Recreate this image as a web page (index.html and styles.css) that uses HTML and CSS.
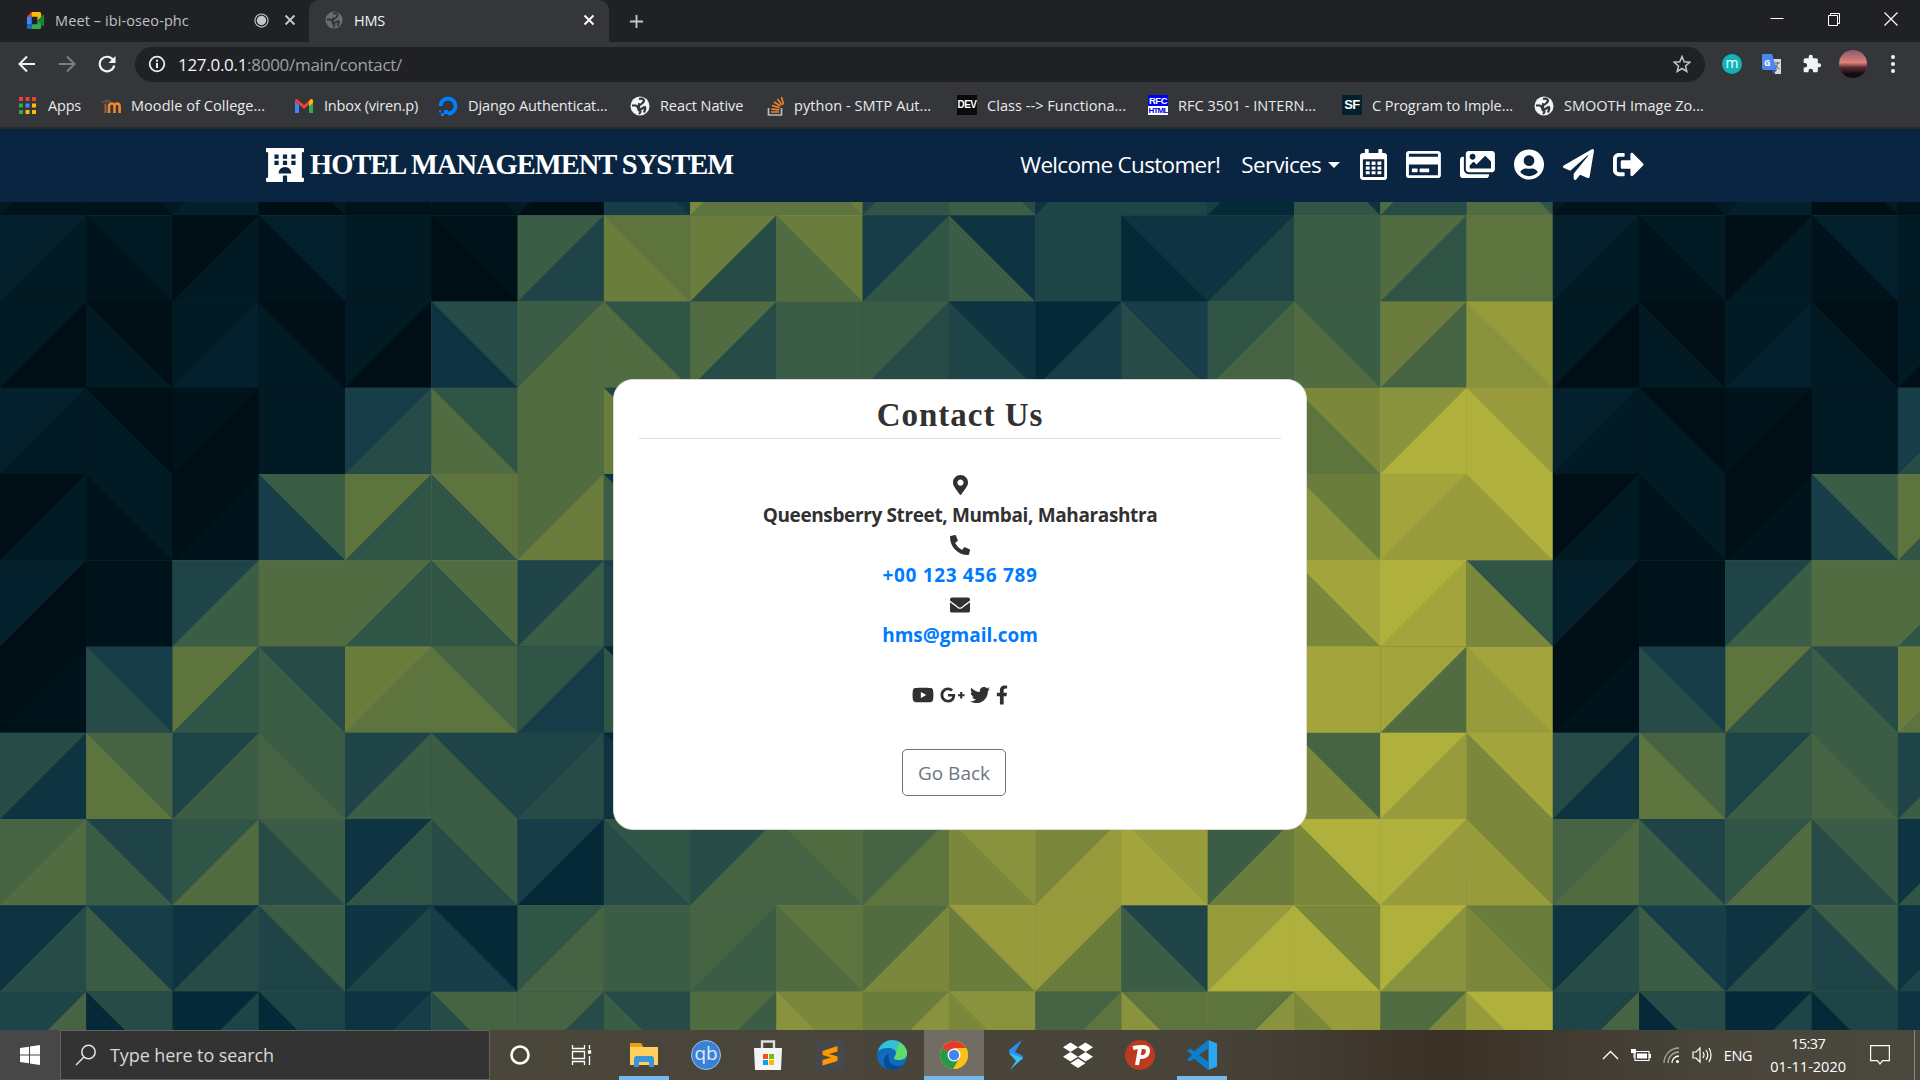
FILE: index.html
```html
<!DOCTYPE html>
<html lang="en">
<head>
<meta charset="utf-8">
<title>HMS</title>
<link rel="stylesheet" href="styles.css">
</head>
<body>
<svg width="0" height="0" class="defs">
  <symbol id="globe" viewBox="0 0 20 20"><circle cx="10" cy="10" r="9.5" fill="currentColor"/><path d="M9 3q3-1 4.500.500T12 7.500 9 8.500t0 2.500 4 1 1 4.500M2 9.500h3.500q2 0 2.500 2.500t2 3-1 3" fill="none" stroke="var(--cut)" stroke-width="2.200"/></symbol>
  <symbol id="close" viewBox="0 0 12 12"><path d="M1.500 1.500l9 9M10.500 1.500l-9 9" stroke="currentColor" stroke-width="1.900"/></symbol>
</svg>

<header class="browser">
  <div class="tabstrip">
    <div class="tab">
      <svg class="fav" viewBox="0 0 20 20"><path d="M1 6l5-5v5z" fill="#ea4335"/><path d="M6 1h8a2 2 0 0 1 2 2v5l-4 2V6H6z" fill="#fbbc04"/><path d="M1 6h5v8H1z" fill="#4285f4"/><path d="M1 14h5v5H3a2 2 0 0 1-2-2z" fill="#1967d2"/><path d="M6 14h6v-4l4-2v9a2 2 0 0 1-2 2H6z" fill="#34a853"/><path d="M12 10l6-6q1-.500 1 .500v11q0 1-1 .500z" fill="#188038"/></svg>
      <span class="t-meet">Meet – ibi-oseo-phc</span>
      <svg class="rec" viewBox="0 0 16 16"><circle cx="8" cy="8" r="7" fill="none" stroke="#c4c7ca" stroke-width="1.200"/><circle cx="8" cy="8" r="5" fill="#c4c7ca"/></svg>
      <svg class="x"><use href="#close"/></svg>
    </div>
    <div class="tab active">
      <svg class="fav dimglobe"><use href="#globe"/></svg>
      <span class="t-hms">HMS</span>
      <svg class="x"><use href="#close"/></svg>
    </div>
    <svg class="plus" viewBox="0 0 16 16"><path d="M8 1v14M1 8h14" stroke="#c4c7ca" stroke-width="2"/></svg>
    <div class="winbtns">
      <svg viewBox="0 0 14 14"><path d="M.5 6.500h13" stroke="#fff"/></svg>
      <svg viewBox="0 0 14 14" fill="none" stroke="#fff"><path d="M1.500 3.500h9v10h-9zM3.500 3.500v-2h9v10h-2"/></svg>
      <svg viewBox="0 0 14 14"><path d="M.5.5l13 13M13.500.5l-13 13" stroke="#fff" stroke-width="1.200"/></svg>
    </div>
  </div>
  <div class="toolbar">
    <svg class="tb" viewBox="0 0 18 18" fill="none" stroke="#f1f3f4" stroke-width="2"><path d="M17 9H2M9 1.500L1.500 9 9 16.500"/></svg>
    <svg class="tb" viewBox="0 0 18 18" fill="none" stroke="#7c7e82" stroke-width="2"><path d="M1 9h15M9 1.500L16.500 9 9 16.500"/></svg>
    <svg class="tb" viewBox="0 0 18 18" fill="none" stroke="#f1f3f4" stroke-width="2.200"><path d="M15 4.800A7.300 7.300 0 1 0 16.200 10.500"/><path d="M17.500 1v7h-7z" fill="#f1f3f4" stroke="none"/></svg>
    <div class="omnibox">
      <svg class="info" viewBox="0 0 18 18"><circle cx="9" cy="9" r="7.300" fill="none" stroke="#e8eaed" stroke-width="1.800"/><path d="M9 8v5M9 4.800v2" stroke="#e8eaed" stroke-width="2"/></svg>
      <span class="t-url"><b>127.0.0.1</b>:8000/main/contact/</span>
      <svg class="star" viewBox="0 0 18 18"><path d="M9 1.500l2.200 5.200 5.600.500-4.300 3.700 1.300 5.500L9 13.500l-4.800 2.900 1.300-5.500L1.200 7.200l5.600-.500z" fill="none" stroke="#c4c7ca" stroke-width="1.500"/></svg>
    </div>
    <div class="ext">
      <span class="mdot">m</span>
      <svg viewBox="0 0 20 20"><path d="M9 5h10v15h-6z" fill="#d5d8dc"/><path d="M0 0h10l5 16H2q-2 0-2-2z" fill="#4c87ee"/><path d="M10 16h5l-4 4z" fill="#3454b4"/><text x="2" y="12" font-size="9" font-weight="700" fill="#fff">G</text><path d="M13 9h5M15.500 8v1q0 4-3 6M13.500 11q1 3 4 4" stroke="#5f6368" fill="none"/></svg>
      <svg viewBox="0 0 24 24"><path fill="#f1f3f4" d="M20.500 11H19V7c0-1.100-.9-2-2-2h-4V3.500a2.500 2.500 0 0 0-5 0V5H4c-1.100 0-2 .9-2 2v3.800h1.500a2.700 2.700 0 0 1 0 5.400H2V20c0 1.100.9 2 2 2h3.800v-1.500a2.700 2.700 0 0 1 5.400 0V22H17c1.100 0 2-.9 2-2v-4h1.500a2.500 2.500 0 0 0 0-5z"/></svg>
      <span class="avatar"></span>
      <svg viewBox="0 0 20 20" fill="#f1f3f4"><circle cx="10" cy="3" r="2"/><circle cx="10" cy="10" r="2"/><circle cx="10" cy="17" r="2"/></svg>
    </div>
  </div>
  <nav class="bookmarks">
    <a><svg class="apps" viewBox="0 0 17 17"><path d="M0 0h4v4H0zM6.500 0h4v4h-4zM13 0h4v4h-4z" fill="#ea4335"/><path d="M0 6.500h4v4H0z" fill="#34a853"/><path d="M6.500 6.500h4v4h-4z" fill="#4285f4"/><path d="M13 6.500h4v4h-4zM6.500 13h4v4h-4zM13 13h4v4h-4z" fill="#fbbc04"/><path d="M0 13h4v4H0z" fill="#34a853"/></svg><span class="b0">Apps</span></a>
    <a><svg viewBox="0 0 20 20"><path d="M8 17V10.500q0-3 2.800-3t2.700 3V17M13.500 10.500q0-3 2.500-3t2.600 3V17" fill="none" stroke="#f0872e" stroke-width="2.600"/><path d="M4.500 8v9" stroke="#9a5a2e" stroke-width="2.400"/><path d="M-1 6l7-3 5 2-6 2.500z" fill="#55504c"/></svg><span class="b1">Moodle of College...</span></a>
    <a><svg viewBox="0 0 20 20"><path d="M1 5v12h4V9z" fill="#4285f4"/><path d="M15 9v8h4V5z" fill="#34a853"/><path d="M1 5q0-2 2-2l7 6 7-6q2 0 2 2l-9 8z" fill="#ea4335"/><path d="M15 5l2-2q2 0 2 2v2l-4 3z" fill="#fbbc04"/></svg><span class="b2">Inbox (viren.p)</span></a>
    <a><svg viewBox="0 0 20 20"><path d="M10 18v-.500a7.500 7.500 0 1 0-7.500-7.500" fill="none" stroke="#0080ff" stroke-width="3.800"/><path d="M6 14h4v4H6zM3 17h3v3H3zM1 14.500h2v2H1z" fill="#0080ff"/></svg><span class="b3">Django Authenticat...</span></a>
    <a><svg class="lightglobe"><use href="#globe"/></svg><span class="b4">React Native</span></a>
    <a><svg class="so" viewBox="0 0 17 20"><path d="M1.500 12v7h13v-7" fill="none" stroke="#bcbbbb" stroke-width="1.700"/><path d="M4 16h8M4.200 13l7.800.900M5 9.500l7.500 2.300M7 6l6.500 4M10.500 3l4.500 6M14.500 1l2 7.500" stroke="#f0872e" stroke-width="1.600"/></svg><span class="b5">python - SMTP Aut...</span></a>
    <a><i class="dev">DEV</i><span class="b6">Class --&gt; Functiona...</span></a>
    <a><i class="rfc"><em>RFC</em><em>HTML</em></i><span class="b7">RFC 3501 - INTERN...</span></a>
    <a><i class="sf">SF</i><span class="b8">C Program to Imple...</span></a>
    <a><svg class="lightglobe"><use href="#globe"/></svg><span class="b9">SMOOTH Image Zo...</span></a>
  </nav>
</header>

<div class="navbar">
  <svg class="hotel" viewBox="0 0 576 512"><path fill-rule="evenodd" d="M560 64c8.840 0 16-7.160 16-16V16c0-8.840-7.160-16-16-16H16C7.160 0 0 7.160 0 16v32c0 8.840 7.160 16 16 16h16v384H16c-8.840 0-16 7.160-16 16v32c0 8.840 7.160 16 16 16h240v-80c0-8.800 7.200-16 16-16h32c8.800 0 16 7.200 16 16v80h240c8.840 0 16-7.160 16-16v-32c0-8.840-7.160-16-16-16h-16V64zM128 96h64v64h-64zM256 96h64v64h-64zM384 96h64v64h-64zM128 192h64v64h-64zM256 192h64v64h-64zM384 192h64v64h-64zM192 384c0-53 43-96 96-96s96 43 96 96z"/></svg>
  <span class="brand">HOTEL MANAGEMENT SYSTEM</span>
  <span class="welcome">Welcome Customer!</span>
  <span class="services">Services</span><i class="caret"></i>
  <div class="navicons">
    <svg viewBox="0 0 448 512"><path fill-rule="evenodd" d="M448 112v352c0 26.500-21.500 48-48 48H48c-26.500 0-48-21.500-48-48V112c0-26.500 21.500-48 48-48h32V12q0-12 12-12h40q12 0 12 12v52h160V12q0-12 12-12h40q12 0 12 12v52h32c26.500 0 48 21.500 48 48zm-48 346V168H48v290q0 6 6 6h340q6 0 6-6zM96 208h64v56H96zM192 208h64v56h-64zM288 208h64v56h-64zM96 288h64v56H96zM192 288h64v56h-64zM288 288h64v56h-64zM96 368h64v48H96zM192 368h64v48h-64zM288 368h64v48h-64z"/></svg>
    <svg viewBox="0 0 576 512"><path d="M527.900 32H48.100C21.500 32 0 53.500 0 80v352c0 26.500 21.500 48 48.100 48h479.800c26.600 0 48.100-21.500 48.100-48V80c0-26.500-21.500-48-48.100-48zM54.100 80h467.800c3.300 0 6 2.700 6 6v42H48.100V86c0-3.300 2.700-6 6-6zm467.800 352H54.100c-3.300 0-6-2.700-6-6V256h479.800v170c0 3.300-2.700 6-6 6zM192 332v40c0 6.600-5.400 12-12 12h-72c-6.600 0-12-5.400-12-12v-40c0-6.600 5.400-12 12-12h72c6.600 0 12 5.400 12 12zm192 0v40c0 6.600-5.400 12-12 12H236c-6.600 0-12-5.400-12-12v-40c0-6.600 5.400-12 12-12h136c6.600 0 12 5.400 12 12z" fill-rule="evenodd"/></svg>
    <svg viewBox="0 0 576 512"><path fill-rule="evenodd" d="M480 416v16c0 26.510-21.490 48-48 48H48c-26.510 0-48-21.490-48-48V176c0-26.510 21.490-48 48-48h16v208c0 44.112 35.888 80 80 80h336zm96-80V80c0-26.510-21.490-48-48-48H144c-26.510 0-48 21.490-48 48v256c0 26.510 21.490 48 48 48h384c26.510 0 48-21.490 48-48zM256 128c0 26.510-21.490 48-48 48s-48-21.490-48-48 21.490-48 48-48 48 21.490 48 48zm-96 144l55.515-55.515c4.686-4.686 12.284-4.686 16.971 0L272 256l135.515-135.515c4.686-4.686 12.284-4.686 16.971 0L512 208v112H160v-48z"/></svg>
    <svg viewBox="0 0 496 512"><path fill-rule="evenodd" d="M248 8C111 8 0 119 0 256s111 248 248 248 248-111 248-248S385 8 248 8zm0 96c48.600 0 88 39.400 88 88s-39.400 88-88 88-88-39.400-88-88 39.400-88 88-88zm0 344c-58.700 0-111.300-26.600-146.500-68.200 18.800-35.400 55.600-59.800 98.500-59.800 2.400 0 4.800.4 7.100 1.100 13 4.200 26.600 6.900 40.900 6.900 14.300 0 28-2.700 40.900-6.900 2.300-.7 4.700-1.100 7.100-1.100 42.900 0 79.700 24.400 98.500 59.800C359.300 421.400 306.700 448 248 448z"/></svg>
    <svg viewBox="0 0 512 512"><path d="M476 3.200L12.500 270.600c-18.100 10.400-15.800 35.600 2.200 43.200L121 358.400l287.300-253.200c5.500-4.900 13.300 2.600 8.600 8.300L176 407v80.500c0 23.600 28.500 32.900 42.500 15.800L282 426l124.600 52.200c14.200 6 30.400-2.900 33-18.200l72-432C515 7.800 493.300-6.800 476 3.200z"/></svg>
    <svg viewBox="0 0 512 512"><path d="M497 273L329 441c-15 15-41 4.500-41-17v-96H152c-13.300 0-24-10.700-24-24v-96c0-13.300 10.700-24 24-24h136V88c0-21.400 25.900-32 41-17l168 168c9.300 9.400 9.300 24.600 0 34zM192 436v-40c0-6.600-5.400-12-12-12H96c-17.700 0-32-14.300-32-32V160c0-17.700 14.300-32 32-32h84c6.600 0 12-5.400 12-12V76c0-6.600-5.400-12-12-12H96c-53 0-96 43-96 96v192c0 53 43 96 96 96h84c6.600 0 12-5.400 12-12z"/></svg>
  </div>
</div>

<main class="page">
  <svg class="mosaic" viewBox="0 202 1920 828"></svg>
  <section class="card">
    <h1><span class="t-contact">Contact Us</span></h1>
    <hr>
    <div class="info-lines">
      <p><svg class="w15" viewBox="0 0 384 512"><path fill-rule="evenodd" d="M172.268 501.670C26.970 291.031 0 269.413 0 192 0 85.961 85.961 0 192 0s192 85.961 192 192c0 77.413-26.970 99.031-172.268 309.670-9.535 13.774-29.930 13.773-39.464 0zM192 272c44.183 0 80-35.817 80-80s-35.817-80-80-80-80 35.817-80 80 35.817 80 80 80z"/></svg></p>
      <p><span class="t-addr">Queensberry Street, Mumbai, Maharashtra</span></p>
      <p><svg class="w20" viewBox="0 0 512 512"><path d="M497.390 361.800l-112-48a24 24 0 0 0-28 6.900l-49.600 60.600A370.660 370.660 0 0 1 130.600 204.110l60.600-49.600a23.940 23.940 0 0 0 6.900-28l-48-112A24.160 24.160 0 0 0 122.600.61l-104 24A24 24 0 0 0 0 48c0 256.500 207.900 464 464 464a24 24 0 0 0 23.400-18.600l24-104a24.290 24.290 0 0 0-14.010-27.600z"/></svg></p>
      <p><a class="t-phone">+00 123 456 789</a></p>
      <p><svg class="w20" viewBox="0 0 512 512"><path d="M502.300 190.800c3.900-3.100 9.700-.2 9.700 4.700V400c0 26.500-21.500 48-48 48H48c-26.500 0-48-21.500-48-48V195.600c0-5 5.700-7.800 9.700-4.700 22.400 17.400 52.100 39.500 154.100 113.600 21.100 15.400 56.700 47.800 92.200 47.600 35.700.3 72-32.800 92.300-47.600 102-74.100 131.600-96.300 154-113.700zM256 320c23.200.4 56.600-29.200 73.400-41.400 132.700-96.300 142.800-104.700 173.400-128.700 5.800-4.500 9.200-11.500 9.200-18.900v-19c0-26.500-21.500-48-48-48H48c-26.500 0-48 21.500-48 48v19c0 7.400 3.400 14.300 9.200 18.900 30.600 23.900 40.700 32.400 173.400 128.700 16.800 12.200 50.200 41.800 73.400 41.400z"/></svg></p>
      <p><a class="t-mail">hms@gmail.com</a></p>
    </div>
    <div class="social">
      <svg class="w22" viewBox="0 0 576 512"><path d="M549.655 124.083c-6.281-23.650-24.787-42.276-48.284-48.597C458.781 64 288 64 288 64S117.220 64 74.629 75.486c-23.497 6.322-42.003 24.947-48.284 48.597-11.412 42.867-11.412 132.305-11.412 132.305s0 89.438 11.412 132.305c6.281 23.650 24.787 41.500 48.284 47.821C117.220 448 288 448 288 448s170.780 0 213.371-11.486c23.497-6.321 42.003-24.171 48.284-47.821 11.412-42.867 11.412-132.305 11.412-132.305s0-89.438-11.412-132.305zm-317.510 213.508V175.185l142.739 81.205-142.739 81.201z"/></svg>
      <svg class="w25" viewBox="0 0 640 512"><path d="M386.061 228.496c1.834 9.692 3.143 19.384 3.143 31.956C389.204 370.205 315.599 448 204.800 448c-106.084 0-192-85.915-192-192s85.916-192 192-192c51.864 0 95.083 18.859 128.611 50.292l-52.126 50.030c-14.145-13.621-39.028-29.599-76.485-29.599-65.484 0-118.920 54.221-118.920 121.277 0 67.056 53.436 121.277 118.920 121.277 75.961 0 104.513-54.745 108.965-82.773H204.800v-66.009h181.261zm185.406 6.437V179.200h-56.001v55.733h-55.733v56.001h55.733v55.733h56.001v-55.733H627.200v-56.001h-55.733z"/></svg>
      <svg class="w20" viewBox="0 0 512 512"><path d="M459.370 151.716c.325 4.548.325 9.097.325 13.645 0 138.720-105.583 298.558-298.558 298.558-59.452 0-114.680-17.219-161.137-47.106 8.447.974 16.568 1.299 25.340 1.299 49.055 0 94.213-16.568 130.274-44.832-46.132-.975-84.792-31.188-98.112-72.772 6.498.974 12.995 1.624 19.818 1.624 9.421 0 18.843-1.300 27.614-3.573-48.081-9.747-84.143-51.980-84.143-102.985v-1.299c13.969 7.797 30.214 12.670 47.431 13.319-28.264-18.843-46.781-51.005-46.781-87.391 0-19.492 5.197-37.360 14.294-52.954 51.655 63.675 129.300 105.258 216.365 109.807-1.624-7.797-2.599-15.918-2.599-24.040 0-57.828 46.782-104.934 104.934-104.934 30.213 0 57.502 12.670 76.670 33.137 23.715-4.548 46.456-13.320 66.599-25.340-7.798 24.366-24.366 44.833-46.132 57.827 21.117-2.273 41.584-8.122 60.426-16.243-14.292 20.791-32.161 39.308-52.628 54.253z"/></svg>
      <svg class="w12" viewBox="0 0 320 512"><path d="M279.140 288l14.220-92.660h-88.910v-60.130c0-25.350 12.420-50.060 52.240-50.060h40.420V6.260S260.430 0 225.360 0c-73.220 0-121.080 44.380-121.080 124.720v70.620H22.890V288h81.390v224h100.170V288z"/></svg>
    </div>
    <a class="goback"><span class="t-back">Go Back</span></a>
  </section>
</main>

<footer class="taskbar">
  <div class="start"><svg width="20" height="20" viewBox="0 0 20 20"><path fill="#fff" d="M0 3l9-1.300V9.500H0zM10 1.500L20 0v9.500H10zM0 10.500h9v7.800L0 17zM10 10.500h10V20l-10-1.500z"/></svg></div>
  <div class="search"><svg width="22" height="22" viewBox="0 0 22 22" fill="none" stroke="#e6e6e6" stroke-width="1.500"><circle cx="13.500" cy="8" r="6.700"/><path d="M9 13l-8 8"/></svg><span class="t-search">Type here to search</span></div>
  <div class="apps-row">
    <div><svg viewBox="0 0 30 30"><circle cx="15" cy="15" r="8.500" fill="none" stroke="#fff" stroke-width="2.600"/></svg></div>
    <div><svg viewBox="0 0 30 30" fill="none" stroke="#fff" stroke-width="1.300"><path d="M5.500 5v3.500h12V5M5.500 11.500h12v7h-12zM5.500 25v-3.500h12V25M22.500 5v4M22.500 16v9"/><path d="M21.500 11h2v2h-2z" fill="#fff"/></svg></div>
    <div class="open"><svg viewBox="0 0 30 30"><path d="M1 3h11l2 3v4H1z" fill="#e8a010"/><path d="M1 7h28v18H1z" fill="#ffd15c"/><path d="M5 27v-8q0-3 3-3h14q3 0 3 3v8h-5v-5h-10v5z" fill="#3a95dc"/></svg></div>
    <div><span class="qb">qb</span></div>
    <div><svg viewBox="0 0 30 30"><path d="M9 9V1.500h12V9" fill="none" stroke="#ddd" stroke-width="2.400"/><path d="M1 8h28l-1 22H2z" fill="#f4f4f4"/><path d="M10 14h5v5h-5z" fill="#f25022"/><path d="M16 14h5v5h-5z" fill="#7fba00"/><path d="M10 20h5v5h-5z" fill="#00a4ef"/><path d="M16 20h5v5h-5z" fill="#ffb900"/></svg></div>
    <div><svg viewBox="0 0 30 30"><rect width="30" height="30" rx="2" fill="#48484a"/><path d="M7.500 11L22.500 6v5.500L14 14l8.500 2.500V21L7.500 25.500V20l8.500-2.500-8.500-2.500z" fill="#ff9800"/></svg></div>
    <div><svg viewBox="0 0 30 30"><circle cx="15" cy="15" r="15" fill="#0f6cbd"/><path d="M1 11C3 4 9 0 15 0c8 0 15 6 15 13 0 5-4 7-8 7-3 0-5-1-5-2s2-2 2-5c0-3-4-5-8-5C7 8 3 9 1 11z" fill="#35c1cf"/><path d="M22 2c5 3 8 7 8 11 0 5-4 7-8 7-3 0-5-1-5-2s2-2 2-5z" fill="#5fdc6a"/><path d="M12 14c-2 6 2 12 9 12 3 0 5-1 6-2-3 4-7 6-12 6C8 30 6 24 7 19c1-3 3-5 5-5z" fill="#0a4a94"/></svg></div>
    <div class="open current"><svg viewBox="0 0 30 30"><circle cx="15" cy="15" r="14" fill="#fbc116"/><path d="M15 15L2.900 8A14 14 0 0 1 27.100 8z" fill="#e33b2e"/><path d="M15 15L2.900 8A14 14 0 0 0 14 29l7-12z" fill="#26994a"/><path d="M27.100 8H15v7l6 3-6 11A14 14 0 0 0 27.100 8z" fill="#fbc116"/><circle cx="15" cy="15" r="6.500" fill="#fff"/><circle cx="15" cy="15" r="5.200" fill="#4285f4"/></svg></div>
    <div><svg viewBox="0 0 30 30"><path d="M21 0L8 10l1 5 12 5 1-4-8-4z" fill="#2f8ff0"/><path d="M8 13l14 5-13 12 6-9z" fill="#37c3f2"/></svg></div>
    <div><svg viewBox="0 0 30 30" fill="#fff"><path d="M7.500 2.500L15 7.200 7.500 12 0 7.200zM22.500 2.500L30 7.200 22.500 12 15 7.200zM7.500 12L15 16.800 7.500 21.500 0 16.800zM22.500 12L30 16.800 22.500 21.500 15 16.800zM15 18.500l7.500 4.700L15 28l-7.500-4.800z"/></svg></div>
    <div><svg viewBox="0 0 30 30"><circle cx="15" cy="15" r="15" fill="#bb3a20"/><path d="M12 25L15 8M8 8q14-3 15 2 0 8-9 7" fill="none" stroke="#fff" stroke-width="4"/></svg></div>
    <div class="open"><svg viewBox="0 0 30 30"><path d="M21 0v30L7 18.500l-4 3-3-2L5 15 0 10.500l3-2 4 3z" fill="#0a7fd0"/><path d="M22 8L12 15l10 7.500z" fill="#4a4539"/><path d="M21.500 0L30 3.500v23L21.500 30z" fill="#2aa7f0"/></svg></div>
  </div>
  <div class="tray">
    <svg class="w17" viewBox="0 0 17 10"><path d="M1 9l7.500-7.500L16 9" fill="none" stroke="#fff" stroke-width="1.400"/></svg>
    <svg class="w20" viewBox="0 0 20 16"><path d="M4 4.500h14v9H4z" fill="none" stroke="#fff" stroke-width="1.200"/><path d="M6 6.500h10v5H6zM18 7h2v4h-2zM0 2h5v4H3.500v5h-1V6H0z" fill="#fff"/></svg>
    <svg class="w17" viewBox="0 0 17 17" fill="none" stroke="#aaa79f" stroke-width="1.300"><path d="M1 16A15 15 0 0 1 16 1M5 16A11 11 0 0 1 16 5"/><path d="M9 16a7 7 0 0 1 7-7" stroke="#fff"/><circle cx="14.500" cy="14.500" r="1.500" fill="#fff" stroke="none"/></svg>
    <svg class="w20" viewBox="0 0 20 18" fill="none" stroke="#fff" stroke-width="1.200"><path d="M1 6h3l4-4v14l-4-4H1zM11 6q2 3 0 6M14 4q3.500 5 0 10M17 2q4 7 0 14"/></svg>
    <span class="t-eng">ENG</span>
    <div class="clock"><span class="t-time">15:37</span><span class="t-date">01-11-2020</span></div>
    <svg class="w20" viewBox="0 0 20 20"><path d="M.6.6h18.800v15H12.500L10 19l-2.500-3.400H.6z" fill="none" stroke="#fff" stroke-width="1.200"/></svg>
    <i class="peek"></i>
  </div>
</footer>
<script src="mosaic.js"></script>
</body>
</html>
```
FILE: styles.css
```css
* { box-sizing: border-box; }
body { margin: 0; width: 1920px; height: 1080px; overflow: hidden; display: flex; flex-direction: column; font-family: "Open Sans", "Noto Sans", sans-serif; white-space: nowrap; }
svg { display: block; flex: none; }
.defs { position: absolute; }
i, em { font-style: normal; }
p { margin: 0; }

.browser { height: 129px; background: #35363a; color: #e8eaed; border-bottom: 2px solid #29292b; font-size: 14.5px; }
.tabstrip { height: 42px; background: #202124; display: flex; align-items: center; }
.tab { display: flex; align-items: center; height: 42px; width: 309px; padding: 0 13px 2px 26px; color: #bdc1c6; }
.tab .fav { width: 19px; height: 19px; margin-right: 10px; }
.tab .rec { width: 15px; height: 15px; margin-left: auto; margin-right: 15px; }
.tab .x { width: 12px; height: 12px; color: #c4c7ca; }
.tab.active { width: 300px; background: #35363a; color: #f1f3f4; border-radius: 10px 10px 0 0; padding: 0 14px 2px 16px; }
.tab.active .fav { width: 18px; height: 18px; margin-right: 11px; }
.tab.active .x { margin-left: auto; color: #fff; }
.t-meet { letter-spacing: .1px; }
.t-hms { letter-spacing: -.2px; }
.dimglobe { color: #6a6d71; --cut: #35363a; }
.lightglobe { color: #f1f3f4; --cut: #35363a; }
.plus { width: 15px; height: 15px; margin-left: 20px; }
.winbtns { display: flex; gap: 43px; margin-left: auto; padding-right: 22px; margin-top: -5px; }
.winbtns svg { width: 14px; height: 14px; }
.toolbar { height: 44px; display: flex; align-items: center; padding-left: 18px; }
.tb { width: 18px; height: 18px; margin-right: 22px; }
.omnibox { width: 1570px; height: 35px; margin-left: -3px; border-radius: 18px; background: #202124; display: flex; align-items: center; padding: 0 14px 0 13px; font-size: 17px; color: #9aa0a6; }
.omnibox b { font-weight: 400; color: #f1f3f4; }
.info { width: 18px; height: 18px; margin-right: 12px; }
.t-url { letter-spacing: -.29px; }
.star { width: 18px; height: 18px; margin-left: auto; }
.ext { display: flex; align-items: center; gap: 20px; margin-left: 17px; }
.ext svg { width: 20px; height: 20px; }
.mdot { width: 20px; height: 20px; border-radius: 50%; background: #0fb5b5; color: #fff; font-size: 14px; line-height: 18px; text-align: center; }
.avatar { width: 28px; height: 28px; border-radius: 50%; margin: 0 -4px 0 -3px; background: linear-gradient(#8a5a70, #e08078 45%, #5a2c34 62%, #120c10 85%); }
.bookmarks { height: 41px; display: grid; grid-template-columns: 82px 193px 144px 192px 137px 190px 191px 194px 192px 200px; padding: 0 0 3px 19px; align-items: center; }
.bookmarks a { display: flex; align-items: center; gap: 10px; }
.bookmarks a svg { width: 20px; height: 20px; margin-top: 1px; }
.bookmarks a .apps { width: 17px; height: 17px; margin-right: 2px; }
.bookmarks a .so { width: 17px; }
.b0, .b2 { letter-spacing: -.2px; }
.b1, .b5, .b6, .b7 { letter-spacing: .05px; }
.b3, .b4, .b8 { letter-spacing: -.08px; }
.dev, .rfc, .sf { width: 20px; height: 20px; font: 700 10px/20px "Liberation Sans", sans-serif; text-align: center; background: #0a0a0a; color: #fff; letter-spacing: -.5px; overflow: hidden; }
.rfc { background: #0000f0; font-size: 9.5px; line-height: 11px; }
.rfc em { display: block; }
.rfc em + em { background: #fff; color: #0000f0; font-size: 8px; line-height: 9px; letter-spacing: -.8px; }
.sf { background: #04202e; font-size: 13px; }

.navbar { height: 73px; background: #0a2542; color: #fff; display: flex; align-items: center; padding: 0 276px 2px 266px; }
.navbar svg { fill: #fff; }
.hotel { width: 38px; height: 34px; }
.brand { font: 700 28.500px "Liberation Serif", serif; margin-left: 6px; letter-spacing: -1px; }
.welcome, .services { font-size: 22.500px; letter-spacing: -.68px; }
.welcome { margin-left: auto; margin-right: 21px; }
.caret { border: 6px solid transparent; border-top: 6px solid #fff; border-bottom: 0; margin: 0 20px 0 7px; }
.navicons { display: flex; gap: 19px; }
.navicons svg { height: 31px; }

.page { height: 828px; display: grid; justify-content: center; align-content: start; }
.mosaic { grid-area: 1 / 1; width: 1920px; height: 828px; }
.card { grid-area: 1 / 1; justify-self: center; width: 694px; height: 451px; margin-top: 177px; background: #fff; border: 1px solid #d8dad2; border-radius: 20px; padding: 13px 25px 0; display: flex; flex-direction: column; align-items: center; color: #313131; z-index: 1; }
.card svg { fill: #313131; height: 20px; }
.card h1 { margin: 0; font: 700 33px/44px "Liberation Serif", serif; height: 45px; }
.t-contact { letter-spacing: 1px; }
.card hr { width: 100%; margin: 0; border: 0; border-top: 1px solid #dedede; }
.info-lines { margin-top: 31px; }
.info-lines p { height: 30px; display: flex; align-items: center; justify-content: center; font-size: 19px; font-weight: 700; }
.info-lines a { color: #007bff; }
.t-addr { letter-spacing: -.37px; }
.info-lines .t-phone { letter-spacing: .65px; }
.w12 { width: 12px; } .w15 { width: 15px; } .w17 { width: 17px; } .w20 { width: 20px; } .w22 { width: 22px; } .w25 { width: 25px; }
.social { margin-top: 30px; height: 30px; display: flex; align-items: center; gap: 5.500px; }
.goback { margin: 39px 12px 0 0; width: 104px; height: 47px; border: 1px solid #6c757d; border-radius: 5px; color: #6c757d; font-size: 19px; display: flex; align-items: center; justify-content: center; }

.taskbar { height: 50px; display: flex; color: #fff; background: linear-gradient(90deg, #474747 0 60px, #4a463a 490px, #48443a 1200px, #3b3126 1440px, #48443a 1700px, #4b483e); }
.start { width: 60px; display: flex; align-items: center; justify-content: center; }
.search { width: 430px; background: #333; border: 1px solid #626262; display: flex; align-items: center; padding-left: 14px; gap: 13px; font-size: 18px; letter-spacing: -.09px; color: #d8d8d8; }
.apps-row { display: grid; grid-template-columns: repeat(12, 62px); margin-left: -1px; }
.apps-row div { display: flex; align-items: center; justify-content: center; border-bottom: 4px solid transparent; padding-top: 4px; margin: 0 6px; }
.apps-row svg { width: 30px; height: 30px; }
.apps-row .open { border-color: #76b9ed; }
.apps-row .current { background: #716d64; margin: 0 1px; }
.qb { width: 30px; height: 30px; border-radius: 50%; background: #3c80d4; border: 1px solid #9cc2ee; color: #dcebff; font-size: 19px; line-height: 24px; text-align: center; }
.tray { margin-left: auto; display: flex; align-items: center; font-size: 14.500px; }
.tray svg { margin-right: 12px; }
.t-eng { letter-spacing: -.3px; }
.t-time { letter-spacing: -.6px; }
.clock { display: flex; flex-direction: column; align-items: center; line-height: 23px; margin: 0 24px 0 18px; }
.peek { width: 1px; height: 50px; background: #8a877e; margin: 0 5px 0 12px; }
```
FILE: mosaic.js
```js
// Shades run from near black (a) to bright yellow (t).
const shades = {
  a: '#000e15', b: '#00131b', c: '#021a24', d: '#04202c', e: '#052936', f: '#0d3440', g: '#163d48',
  h: '#1e4447', i: '#274c48', j: '#305446', k: '#3b5c45', l: '#466443', m: '#526c41', n: '#5d743f',
  o: '#6b7d3d', p: '#7b883c', q: '#89923c', r: '#979b3c', s: '#a3a43c', t: '#b0b03d'
};
// One pair per cell: the shade of the left triangle, then of the right one.
const rows = [
  'cb bc cd ac bb bc ca gf pn no hj ki fh hh ge jf mi mj',
  'dc bc ac bd cc ab kh on oi mo gj kf hh ef fh kk mj nn',
  'ca ca cd ca ca fi km mj mi kk ki hf eg ig jl mk ol qr',
  'dc ca ba cc gi mj mm oh hh hh hh hh hh hh hh np qt tr',
  'ac bc ab gk nj jn mo kf hh hh hh hh hh hh hh qo sr rt',
  'da bb hk mm mj jm hk hg hh hh hh hh hh hh hh ps ts pj',
  'ab ig nj ki on nl jg je hh hh hh hh hh hh hh ss sm rs',
  'if nl hk lk hk kh hi fe hh hh hh hh hh hh hh pl tr ps',
  'lm kh jm ik fj ik ge ij il lm ln pq pr sr ko pt tr rp',
  'fi kg fi hk fh ge jl kk lk mn mp or ro kh rt tp tq po',
  'hl ei eh eh fg il li ki mk qp oq pq ln qn nq pr mp rt'
].map(r => r.split(' '));
const size = 86.27;
const svg = document.querySelector('.mosaic');
let out = '';
rows.forEach((row, r) => {
  const y = 215.200 + (r - 1) * 86.260, y2 = y + 86.260;
  for (let c = 0; c < 23; c++) {
    const col = c % 18, x = c * size, x2 = x + size;
    const [left, right] = row[col];
    const slash = col % 2 === 0;
    out += `<rect x="${x}" y="${y}" width="${size + .5}" height="86.760" fill="${shades[right]}"/>`;
    out += `<path d="M${x} ${y}L${slash ? `${x2} ${y}` : `${x2} ${y2}`}L${x} ${y2}z" fill="${shades[left]}"/>`;
  }
});
svg.innerHTML = out;
```
